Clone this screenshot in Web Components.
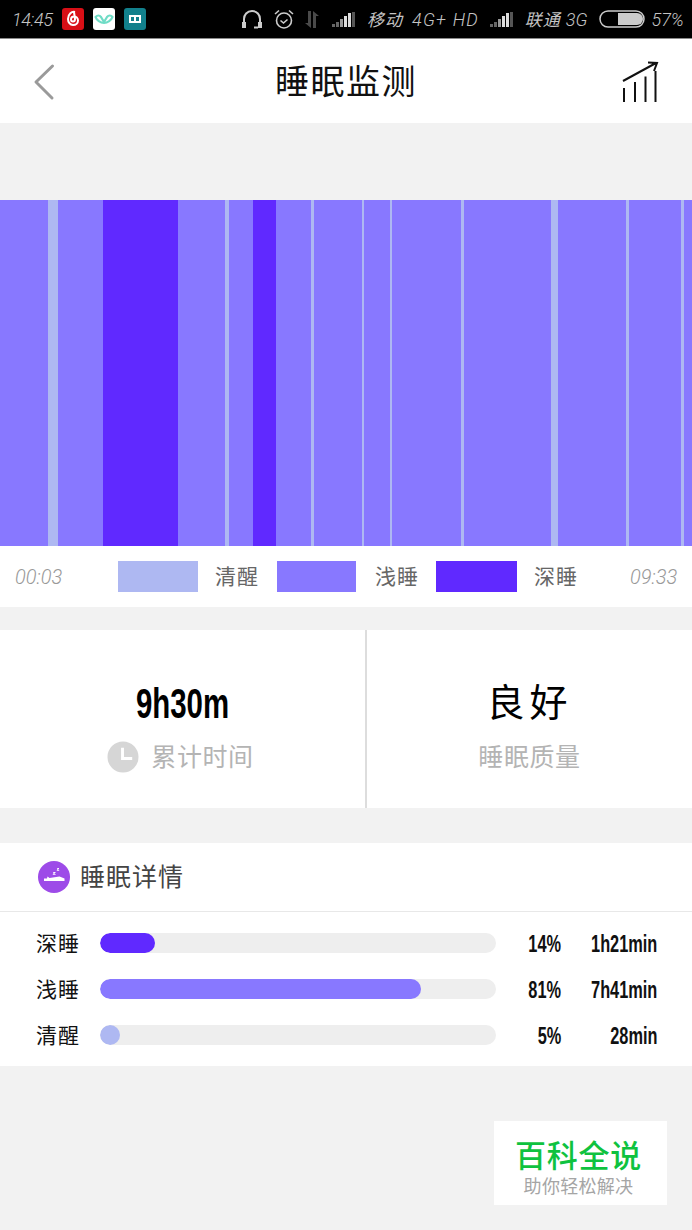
<!DOCTYPE html>
<html lang="zh">
<head>
<meta charset="utf-8">
<title>睡眠监测</title>
<style>
  html, body { margin: 0; background: #f2f2f2; }
  body { width: 692px; height: 1230px; overflow: hidden; display: flex; flex-direction: column;
    font-family: "Noto Sans CJK SC", "Noto Sans", sans-serif; }
</style>
</head>
<body>
<status-bar></status-bar>
<app-header>睡眠监测</app-header>
<sleep-chart></sleep-chart>
<sleep-legend></sleep-legend>
<sleep-stats></sleep-stats>
<sleep-detail>
  <detail-row label="深睡" fill="55" color="#6029ff" pct="14%" time="1h21min"></detail-row>
  <detail-row label="浅睡" fill="321" color="#8878ff" pct="81%" time="7h41min"></detail-row>
  <detail-row label="清醒" fill="20" color="#aeb8f2" pct="5%" time="28min"></detail-row>
</sleep-detail>
<water-mark></water-mark>
<script>
const cjk = '"Noto Sans CJK SC", "Noto Sans", sans-serif';
const sans = '"Liberation Sans", sans-serif';

function shadow(el, html) {
  el.attachShadow({ mode: "open" }).innerHTML = html;
}

const signal = `<svg width="23" height="16" viewBox="0 0 23 16">
  <path fill="#666" d="M0 13h3v3H0zM4 11h3v5H4z"/><path fill="#999" d="M8 8h3v8H8z"/>
  <path fill="#ddd" d="M12 5h3v11h-3zM16 2h3v14h-3z"/><path fill="#555" d="M20 1h3v15h-3z"/></svg>`;

customElements.define("status-bar", class extends HTMLElement {
  connectedCallback() {
    shadow(this, `<style>
      :host { display: flex; align-items: center; height: 38px; background: #000; color: #c4c4c4;
        border-bottom: 1px solid #8a8a8a; font: italic 300 18px Roboto, sans-serif; white-space: nowrap; }
      svg { display: block; flex: none; }
      span { display: block; }
      .cn { font: 400 17px ${cjk}; font-style: italic; letter-spacing: 1px; margin-bottom: 2px; }
    </style>
    <span style="margin-left:12px;width:50px;letter-spacing:-.4px">14:45</span>
    <svg width="22" height="22" viewBox="0 0 22 22"><rect width="22" height="22" rx="3" fill="#d80f16"/>
      <path fill="none" stroke="#fff" stroke-width="2" d="M13 4c-3-1-7 2-7 7 0 3 2 6 5 6s5-2 5-4.500-2-4-4-4-3 1.500-3 3 1 2 2 2 2-1 2-2.500L12 4"/></svg>
    <svg style="margin-left:9px" width="22" height="22" viewBox="0 0 22 22"><rect width="22" height="22" rx="3" fill="#fff"/>
      <path fill="none" stroke="#6fdcc6" stroke-width="2.200" stroke-linejoin="round" d="M2.500 9c2-2 4-2 5.500 0l3 5 3-5c1.500-2 4-2 5.500 0-1 3-5 6-8.500 6S3.500 12 2.500 9z"/></svg>
    <svg style="margin-left:9px" width="22" height="22" viewBox="0 0 22 22"><rect width="22" height="22" rx="3" fill="#12808c"/>
      <path fill="#fff" d="M5 7h12v8H5z"/><path fill="#12808c" d="M7 9h3v4H7zM12 9h3v4h-3z"/></svg>
    <svg style="margin-left:96px" width="20" height="20" viewBox="0 0 20 20"><path fill="none" stroke="#ccc" stroke-width="2" d="M2 14v-4c0-4 3-8 8-8s8 4 8 8v4M12 18.500h4"/><path fill="#ccc" d="M0 13h4v6H0zM16 13h4v6h-4z"/></svg>
    <svg style="margin-left:12px" width="20" height="21" viewBox="0 0 20 21"><circle cx="10" cy="11.500" r="7.500" fill="none" stroke="#ccc" stroke-width="1.600"/>
      <path fill="none" stroke="#ccc" stroke-width="1.600" d="M6.500 11.500l3 2.500 4-3.500M1 5l4-3.500M19 5l-4-3.500"/></svg>
    <svg style="margin-left:10px" width="16" height="17" viewBox="0 0 16 17"><path fill="#4a4a4a" d="M4 0h3v17L1 12h3zM9 0l6 5h-3v12H9z"/></svg>
    <span style="margin-left:12px;height:16px">${signal}</span>
    <span class="cn" style="margin-left:12px">移动</span>
    <span style="margin-left:9px;letter-spacing:1.200px">4G+ HD</span>
    <span style="margin-left:11px;height:16px">${signal}</span>
    <span class="cn" style="margin-left:12px">联通</span>
    <span style="margin-left:5px">3G</span>
    <svg style="margin-left:12px" width="46" height="18" viewBox="0 0 46 18"><rect x="1" y="1" width="44" height="16" rx="8" fill="none" stroke="#ccc" stroke-width="1.500"/><path fill="#ccc" d="M19 3h19a6 6 0 0 1 0 12H19z"/></svg>
    <span style="margin-left:6px">57%</span>`);
  }
});

customElements.define("app-header", class extends HTMLElement {
  connectedCallback() {
    shadow(this, `<style>
      :host { display: flex; align-items: center; justify-content: center; position: relative; height: 84px;
        background: #fff; color: #111; font: 400 34px ${cjk}; letter-spacing: 1.500px; }
      div { margin-bottom: 3px; }
      svg { position: absolute; }
      .back { left: 32px; top: 24px; }
      .trend { right: 33px; top: 21px; }
    </style>
    <svg class="back" width="24" height="38" viewBox="0 0 24 38"><path fill="none" stroke="#9a9a9a" stroke-width="3" stroke-linecap="round" stroke-linejoin="round" d="M20.500 3 4 19l16 16"/></svg>
    <div><slot></slot></div>
    <svg class="trend" width="37" height="44" viewBox="0 0 37 44"><path fill="none" stroke="#111" stroke-width="2" d="M2 42V28M13 42V22M23.500 42V16.500M33.500 42V11M1 21 34 3M26 2.500l9 .5-3 8"/></svg>`);
  }
});

customElements.define("sleep-chart", class extends HTMLElement {
  connectedCallback() {
    const c = { l: "#8878ff", d: "#6029ff", a: "#aeb8f2" };
    // end x of each stretch and its sleep stage
    const data = [[48,"l"],[58,"a"],[103,"l"],[178,"d"],[224.500,"l"],[229,"a"],[252.500,"l"],[275.500,"d"],
      [310.500,"l"],[313.500,"a"],[361.500,"l"],[364,"a"],[389.500,"l"],[392,"a"],[461,"l"],[464,"a"],
      [551,"l"],[557.500,"a"],[626,"l"],[629,"a"],[681,"l"],[684,"a"],[692,"l"]];
    let x = 0, html = "";
    for (const [end, t] of data) {
      html += `<i style="flex:${end - x} 0 0;background:${c[t]}"></i>`;
      x = end;
    }
    shadow(this, `<style>
      :host { display: flex; height: 346px; margin-top: 77px; }
      i { display: block; }
    </style>${html}`);
  }
});

customElements.define("sleep-legend", class extends HTMLElement {
  connectedCallback() {
    shadow(this, `<style>
      :host { display: flex; align-items: center; height: 61px; background: #fff; color: #666; font: 400 21px ${cjk}; white-space: nowrap; }
      .t { font: italic 300 20px Roboto, sans-serif; color: #999; width: 47px; }
      b { display: block; height: 31px; flex: none; }
      span { display: block; width: 44px; letter-spacing: 1px; margin-bottom: 3px; }
    </style>
    <div class="t" style="margin-left:15px">00:03</div>
    <b style="margin-left:56px;width:80px;background:#aeb8f2"></b><span style="margin-left:17px;margin-right:18px">清醒</span>
    <b style="width:79px;background:#8878ff"></b><span style="margin-left:19px;margin-right:17px">浅睡</span>
    <b style="width:81px;background:#6029ff"></b><span style="margin-left:17px">深睡</span>
    <div class="t" style="margin-left:52px">09:33</div>`);
  }
});

customElements.define("sleep-stats", class extends HTMLElement {
  connectedCallback() {
    shadow(this, `<style>
      :host { display: flex; height: 178px; margin-top: 23px; background: #fff; }
      .c { flex: none; display: flex; flex-direction: column; align-items: center; box-sizing: border-box; }
      .l { width: 367px; border-right: 2px solid #ddd; }
      .r { width: 325px; }
      .num { font: 700 42px/60px ${sans}; color: #000; height: 60px; margin-top: 44px; transform: scaleX(.7); }
      .q { font: 400 38px/60px ${cjk}; letter-spacing: 5px; color: #000; margin-top: 40px; height: 60px; }
      .sub { display: flex; align-items: center; gap: 12px; font: 400 25px/36px ${cjk}; letter-spacing: .6px; color: #b4b4b4; }
      svg { display: block; margin-top: 4px; }
    </style>
    <div class="c l">
      <div class="num">9h30m</div>
      <div class="sub" style="margin-top:3px;padding-right:4px"><svg width="32" height="32" viewBox="0 0 33 33"><circle cx="16.500" cy="16.500" r="16" fill="#d6d6d6"/><path fill="none" stroke="#fff" stroke-width="3" d="M16 7v11h10"/></svg>累计时间</div>
    </div>
    <div class="c r">
      <div class="q">良好</div>
      <div class="sub" style="margin-top:7px">睡眠质量</div>
    </div>`);
  }
});

customElements.define("sleep-detail", class extends HTMLElement {
  connectedCallback() {
    shadow(this, `<style>
      :host { display: block; margin-top: 35px; background: #fff; height: 223px; }
      header { display: flex; align-items: center; gap: 10px; height: 68px; padding-left: 38px; border-bottom: 1px solid #e8e8e8;
        font: 400 25px ${cjk}; letter-spacing: 1px; color: #444; }
      header div { margin-bottom: 4px; }
      svg { display: block; }
      main { display: flex; flex-direction: column; gap: 26px; padding-top: 21px; }
    </style>
    <header>
      <svg width="32" height="32" viewBox="0 0 32 32"><circle cx="16" cy="16" r="16" fill="#9d4be8"/>
        <path fill="#fff" d="M6 17.500h3l.500-2 2 1.500 10-1.500 5 2v2.500H6zM15 11h2.500v.8L16 13h1.600v.8H14.800V13l1.500-1.200H15zM19 7h2v.7L20 9h1.200v.7h-2.400V9l1.200-1.300H19z"/></svg>
      <div>睡眠详情</div>
    </header>
    <main><slot></slot></main>`);
  }
});

customElements.define("detail-row", class extends HTMLElement {
  connectedCallback() {
    const a = (n) => this.getAttribute(n);
    shadow(this, `<style>
      :host { display: flex; align-items: center; height: 20px; white-space: nowrap; }
      .n { width: 64px; margin-left: 36px; margin-bottom: 2px; font: 400 21px/20px ${cjk}; letter-spacing: 1px; color: #111; }
      .track { width: 396px; height: 20px; border-radius: 10px; background: #eee; overflow: hidden; }
      .fill { height: 100%; border-radius: 10px; }
      .v { text-align: right; font: 700 23px/20px ${sans}; color: #111; margin-top: 2px; }
      .v span { display: inline-block; transform: scaleX(.71); transform-origin: right center; }
    </style>
    <div class="n">${a("label")}</div>
    <div class="track"><div class="fill" style="width:${a("fill")}px;background:${a("color")}"></div></div>
    <div class="v" style="width:65px"><span>${a("pct")}</span></div>
    <div class="v" style="width:96px"><span>${a("time")}</span></div>`);
  }
});

customElements.define("water-mark", class extends HTMLElement {
  connectedCallback() {
    shadow(this, `<style>
      :host { display: flex; flex-direction: column; align-items: center; align-self: flex-end;
        box-sizing: border-box; width: 173px; height: 84px; margin: 55px 25px 0 0; padding: 15px 4px 0 0; background: #fff; }
      .a { font: 500 31px/36px ${cjk}; letter-spacing: .8px; color: #0fc23f; }
      .b { font: 400 18px/22px ${cjk}; letter-spacing: .3px; color: #a5a5a5; margin-top: 2px; }
    </style>
    <div class="a">百科全说</div>
    <div class="b">助你轻松解决</div>`);
  }
});
</script>
</body>
</html>
